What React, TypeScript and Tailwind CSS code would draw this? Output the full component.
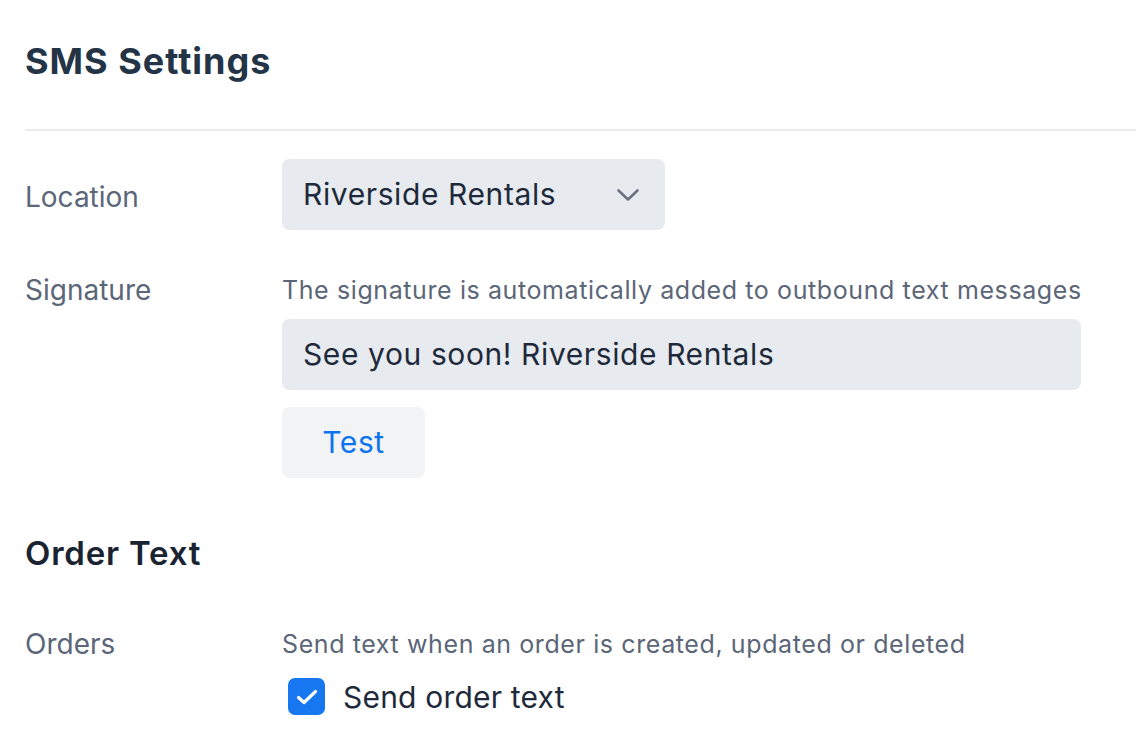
export default function App() {
  return (
    <div
      className="min-h-screen bg-white pl-[25px] pt-[40px] text-[#1e2a3b]"
      style={{ fontFamily: 'Inter, "Noto Sans", sans-serif' }}
    >
      {/* Header */}
      <div className="border-b-2 border-[#e8eaed] pb-[47px]">
        <h1 className="text-[36px] leading-[42px] font-bold tracking-[1px] text-[#243447]">
          SMS Settings
        </h1>
      </div>

      {/* Location */}
      <div className="mt-[28px] flex items-center">
        <div className="w-[257px] pt-[4px] text-[28px] text-[#5b6678]">Location</div>
        <div className="flex h-[71px] w-[383px] items-center justify-between rounded-lg bg-[#e7eaef] pl-[21px] pr-[25px]">
          <span className="text-[30px] tracking-[0.6px] text-[#1e2a3b]">Riverside Rentals</span>
          <svg width="24" height="14" viewBox="0 0 24 14" fill="none">
            <path d="M2.5 2.5 12 11.5l9.5-9" stroke="#6b7280" strokeWidth="2.6" strokeLinecap="round" strokeLinejoin="round" />
          </svg>
        </div>
      </div>

      {/* Signature */}
      <div className="mt-[44px] flex">
        <div className="w-[257px] text-[28px] leading-[32px] text-[#5b6678]">Signature</div>
        <div className="flex flex-col">
          <p className="text-[25px] leading-[32px] tracking-[0.6px] text-[#5b6678]">
            The signature is automatically added to outbound text messages
          </p>
          <div className="mt-[13px] flex h-[71px] w-[799px] items-center rounded-lg bg-[#e7eaef] pl-[21px]">
            <span className="text-[30px] tracking-[0.6px] text-[#1e2a3b]">See you soon! Riverside Rentals</span>
          </div>
          <button className="mt-[17px] h-[71px] w-[143px] rounded-lg bg-[#f2f3f5] text-[30px] tracking-[0.6px] text-[#0b74ee]">
            Test
          </button>
        </div>
      </div>

      {/* Order Text */}
      <h2 className="mt-[56px] text-[33px] leading-[38px] font-semibold tracking-[0.8px] text-[#1a2332]">Order Text</h2>

      <div className="mt-[56px] flex">
        <div className="w-[257px] text-[28px] leading-[32px] text-[#5b6678]">Orders</div>
        <div className="flex flex-col">
          <p className="text-[25px] leading-[32px] tracking-[0.6px] text-[#5b6678]">
            Send text when an order is created, updated or deleted
          </p>
          <label className="mt-[18px] flex items-center gap-[18px] pl-[6px]">
            <span className="flex h-[37px] w-[37px] items-center justify-center rounded-[7px] bg-[#1677f0]">
              <svg width="24" height="18" viewBox="0 0 24 18" fill="none">
                <path d="M3.5 9.5 9 14.5 20.5 3.5" stroke="white" strokeWidth="3.2" strokeLinecap="round" strokeLinejoin="round" />
              </svg>
            </span>
            <span className="text-[30px] leading-[36px] tracking-[0.2px] text-[#1e2a3b]">Send order text</span>
          </label>
        </div>
      </div>
    </div>
  )
}
